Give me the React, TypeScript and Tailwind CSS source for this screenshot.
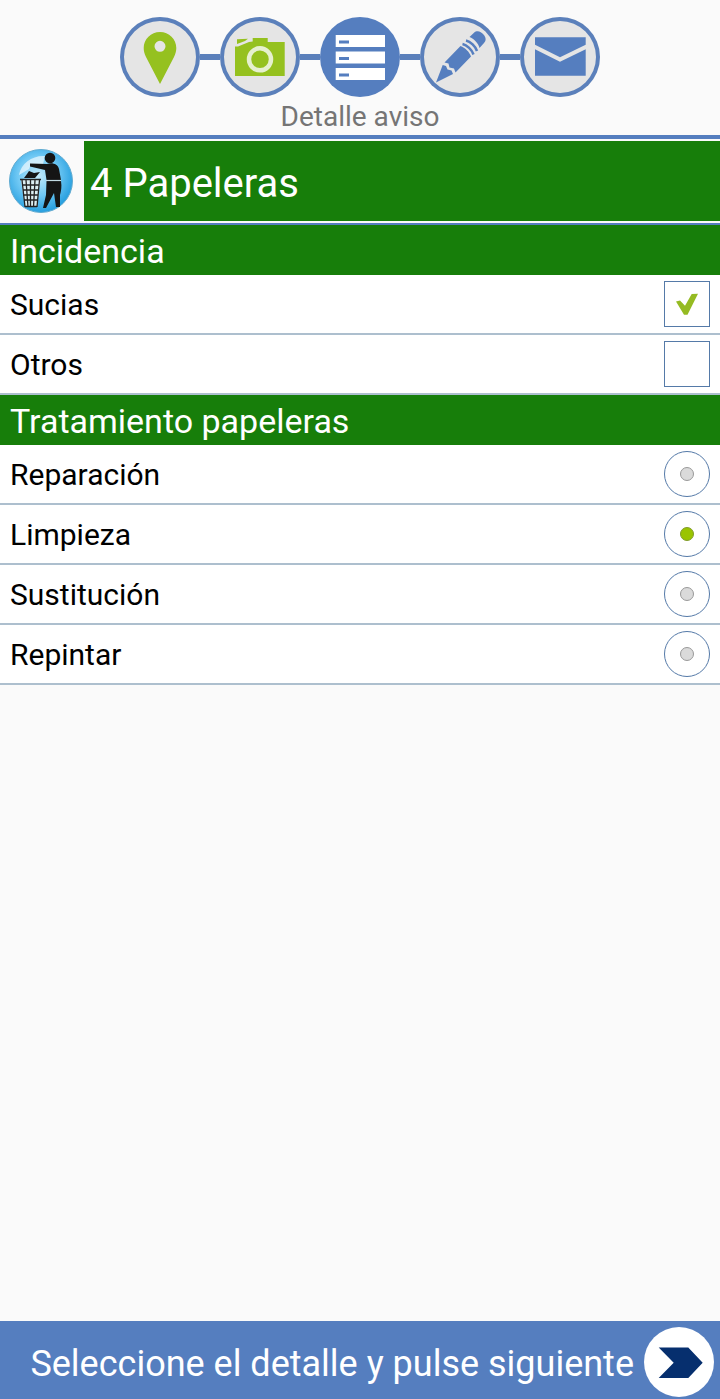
import React, { useState } from 'react'

const steps = [
  { id: 'ubicacion', label: 'Ubicación', icon: <PinIcon /> },
  { id: 'foto', label: 'Foto', icon: <CameraIcon /> },
  { id: 'detalle', label: 'Detalle aviso', icon: <ListIcon /> },
  { id: 'comentario', label: 'Comentario', icon: <PencilIcon /> },
  { id: 'envio', label: 'Envío', icon: <MailIcon /> },
]

const incidencias = ['Sucias', 'Otros']
const tratamientos = ['Reparación', 'Limpieza', 'Sustitución', 'Repintar']

function PinIcon() {
  return (
    <svg viewBox="0 0 80 80" className="size-full" fill="#95c11f">
      <path
        fillRule="evenodd"
        d="M40 15C31 15 23.700 22 23.700 31C23.700 34 24.500 37 26 40L40 67L54 40C55.500 37 56.300 34 56.300 31C56.300 22 49 15 40 15ZM40 23.800A5.500 5.500 0 1 1 40 34.800A5.500 5.500 0 1 1 40 23.800Z"
      />
    </svg>
  )
}

function CameraIcon() {
  return (
    <svg viewBox="0 0 80 80" className="size-full" fill="#95c11f">
      <path d="M15 29.500L18 29.500L29 25L32.700 24.500V21H47.700V25H64.700V59H15Z" />
      <path d="M17 22.300L28 21.700L25 24L17 27Z" />
      <circle cx="40" cy="42.300" r="11" fill="#95c11f" stroke="#e6f0cf" strokeWidth="4.500" />
    </svg>
  )
}

function ListIcon() {
  return (
    <svg viewBox="0 0 80 80" className="size-full" fill="#fff">
      {[18, 34.5, 51].map((y) => (
        <g key={y}>
          <rect x="15.700" y={y} width="49.300" height="12" />
          <rect x="19" y={y + 5.5} width="10" height="3" fill="#557ebf" />
        </g>
      ))}
    </svg>
  )
}

function PencilIcon() {
  return (
    <svg viewBox="0 0 80 80" className="size-full" fill="#557ebf">
      <path d="M16 65.500L22.700 48L26 49L27.500 52.500L31.500 53.500L33 57Z" />
      <path d="M24.500 45.500L40.500 29C45 30.500 49.500 35 51 39.500L35.500 55.500L34 51.500L29.500 50.500L28.500 46.500Z" />
      <path d="M49.500 20L54 15.800C57 13 61 14.500 63.500 17.500C66 20.500 66.500 23.500 64 26L59.500 31C58.500 26.500 54 21.500 49.500 20Z" />
      <path
        d="M46 23.500C50.500 24.500 55.500 29.500 57 34M42.500 27C47 28 52 33 53.500 37.500"
        fill="none"
        stroke="#557ebf"
        strokeWidth="2.500"
      />
    </svg>
  )
}

function MailIcon() {
  return (
    <svg viewBox="0 0 80 80" className="size-full" fill="#557ebf">
      <path d="M15 20.300H65.700V27.700L40 40.300L15 27.700Z" />
      <path d="M15 32.300L40 44.700L65.700 32.300V58.700H15Z" />
    </svg>
  )
}

function LitterIcon() {
  return (
    <svg viewBox="0 0 64 64" className="size-16 shrink-0" aria-hidden="true">
      <defs>
        <radialGradient id="sky" cx="45%" cy="42%" r="58%">
          <stop offset="0" stopColor="#c4eafa" />
          <stop offset="0.550" stopColor="#6fc8f4" />
          <stop offset="1" stopColor="#279fdf" />
        </radialGradient>
      </defs>
      <circle cx="32" cy="32" r="31.500" fill="url(#sky)" stroke="#62abd0" />
      <path d="M10 26C12 14 24 6 36 7L34 15L22 15L20 20Z" fill="#eefaff" opacity="0.700" />
      {/* figure */}
      <g fill="#151515">
        <circle cx="41" cy="9" r="5.300" />
        <path d="M21 14.500L38 15C43 13 49 15 50 20L52 31H37.500L36 21L21 17.500Z" />
        <path d="M37.500 32H52C53 38 52 42 51 46L51 58H47L45 44L37 59H34L37 46Z" />
        <path d="M15 29L18 25L20 22L25 24L31 23L26 29Z" />
      </g>
      <path d="M37 31.500H52" stroke="#c3dbe3" strokeWidth="1.200" />
      {/* basket */}
      <path d="M12 31H31L28 58H16Z" fill="#dceef2" />
      <path
        d="M11 30.500H32M13 36H30M14 41H30M14 46H29M15 51H29M16 57.500H28M13 31L16 58M17 31L19 58M21.500 31V58M26 31L24.500 58M30.500 31L28 58"
        fill="none"
        stroke="#222"
        strokeWidth="1.300"
      />
    </svg>
  )
}

function SectionTitle({ children }: { children: React.ReactNode }) {
  return (
    <h2 className="flex h-[50px] items-center bg-[#177e0a] px-[10px] pt-[2px] text-[34px] leading-10 text-white">
      {children}
    </h2>
  )
}

type OptionProps = {
  label: string
  checked: boolean
  onChange: () => void
}

const rowClass =
  'flex h-[60px] cursor-pointer items-center justify-between border-b-2 border-[#adbfce] bg-white px-[10px] text-[30px] leading-9 text-black'

function CheckRow({ label, checked, onChange }: OptionProps) {
  return (
    <label className={rowClass}>
      <span className="pt-[2px]">{label}</span>
      <span className="grid size-[46px] shrink-0">
        <input
          type="checkbox"
          checked={checked}
          onChange={onChange}
          className="peer col-start-1 row-start-1 size-full appearance-none border border-[#557aa8] bg-white"
        />
        <svg
          viewBox="0 0 46 46"
          className="pointer-events-none invisible col-start-1 row-start-1 size-full peer-checked:visible"
        >
          <path d="M12 20.500L16 19.500L21 24.700L27.700 13L34 12.700L23.500 33.700H20Z" fill="#95bb22" />
        </svg>
      </span>
    </label>
  )
}

function RadioRow({ label, checked, onChange }: OptionProps) {
  return (
    <label className={rowClass}>
      <span className="pt-[2px]">{label}</span>
      <span className="grid size-[46px] shrink-0 place-items-center">
        <input
          type="radio"
          name="tratamiento"
          checked={checked}
          onChange={onChange}
          className="peer col-start-1 row-start-1 size-full appearance-none rounded-full border border-[#557aa8] bg-white"
        />
        <span className="pointer-events-none col-start-1 row-start-1 size-[14px] rounded-full border border-[#999] bg-[#dadada] peer-checked:border-[#819b2b] peer-checked:bg-[#9ac400]" />
      </span>
    </label>
  )
}

const App = () => {
  const [marcadas, setMarcadas] = useState<string[]>(['Sucias'])
  const [tratamiento, setTratamiento] = useState('Limpieza')
  const current = 'detalle'

  const toggle = (item: string) => {
    setMarcadas((prev) => (prev.includes(item) ? prev.filter((i) => i !== item) : [...prev, item]))
  }

  return (
    <div className="flex min-h-screen flex-col bg-[#fafafa] font-[Roboto,sans-serif]">
      {/* Steps */}
      <header className="flex flex-col items-center border-b-4 border-[#557ebf] pt-[17px]">
        <nav className="flex items-center">
          {steps.map((step, index) => (
            <React.Fragment key={step.id}>
              {index > 0 && <div className="h-[6px] w-5 bg-[#5b80bb]"></div>}
              <button
                type="button"
                aria-label={step.label}
                className={`grid size-20 place-items-center rounded-full ${
                  step.id === current ? 'bg-[#557ebf]' : 'bg-[#e5e5e5] ring-4 ring-[#5b80bb] ring-inset'
                }`}
              >
                {step.icon}
              </button>
            </React.Fragment>
          ))}
        </nav>
        <p className="pt-1 pb-[2px] text-[28px] leading-8 text-[#757575]">Detalle aviso</p>
      </header>

      {/* Category */}
      <div className="flex items-stretch border-b-2 border-[#557ebf] py-[2px]">
        <div className="flex w-[84px] shrink-0 items-center pl-[9px]">
          <LitterIcon />
        </div>
        <h1 className="flex h-20 flex-1 items-center bg-[#177e0a] px-[6px] pt-[6px] text-[40px] leading-12 text-white">
          4 Papeleras
        </h1>
      </div>

      <main className="flex-1">
        <section>
          <SectionTitle>Incidencia</SectionTitle>
          {incidencias.map((item) => (
            <CheckRow key={item} label={item} checked={marcadas.includes(item)} onChange={() => toggle(item)} />
          ))}
        </section>

        <section>
          <SectionTitle>Tratamiento papeleras</SectionTitle>
          {tratamientos.map((item) => (
            <RadioRow key={item} label={item} checked={tratamiento === item} onChange={() => setTratamiento(item)} />
          ))}
        </section>
      </main>

      {/* Footer */}
      <footer className="flex items-center justify-end gap-[10px] bg-[#557ebf] pt-[6px] pr-[6px] pb-[2px]">
        <p className="pt-1 text-[36px] leading-11 text-white">Seleccione el detalle y pulse siguiente</p>
        <button type="button" aria-label="Siguiente" className="size-[70px] shrink-0 rounded-full bg-white">
          <svg viewBox="0 0 70 70" className="size-full" fill="#062f6e">
            <path d="M14.700 20.500H44.300L58.700 35.700L44.300 51H14.700L29.700 35.700Z" />
          </svg>
        </button>
      </footer>
    </div>
  )
}

export default App
